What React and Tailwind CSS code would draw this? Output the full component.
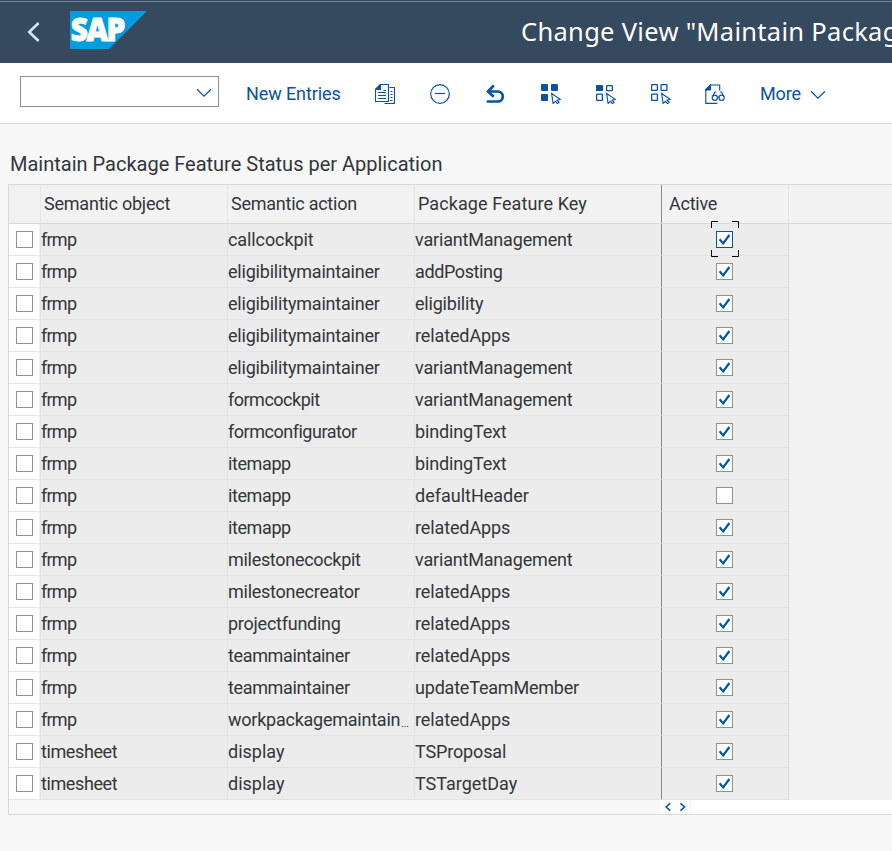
const ROWS = [
  ['frmp', 'callcockpit', 'variantManagement', true],
  ['frmp', 'eligibilitymaintainer', 'addPosting', true],
  ['frmp', 'eligibilitymaintainer', 'eligibility', true],
  ['frmp', 'eligibilitymaintainer', 'relatedApps', true],
  ['frmp', 'eligibilitymaintainer', 'variantManagement', true],
  ['frmp', 'formcockpit', 'variantManagement', true],
  ['frmp', 'formconfigurator', 'bindingText', true],
  ['frmp', 'itemapp', 'bindingText', true],
  ['frmp', 'itemapp', 'defaultHeader', false],
  ['frmp', 'itemapp', 'relatedApps', true],
  ['frmp', 'milestonecockpit', 'variantManagement', true],
  ['frmp', 'milestonecreator', 'relatedApps', true],
  ['frmp', 'projectfunding', 'relatedApps', true],
  ['frmp', 'teammaintainer', 'relatedApps', true],
  ['frmp', 'teammaintainer', 'updateTeamMember', true],
  ['frmp', 'workpackagemaintain', 'relatedApps', true],
  ['timesheet', 'display', 'TSProposal', true],
  ['timesheet', 'display', 'TSTargetDay', true],
];

const TRACKING = {
  frmp: 'tracking-[-0.75px]',
  timesheet: 'tracking-[-0.4px]',
  callcockpit: 'tracking-[-0.1px]',
  eligibilitymaintainer: 'tracking-[-0.2px]',
  formcockpit: 'tracking-[-0.5px]',
  formconfigurator: 'tracking-[-0.48px]',
  itemapp: 'tracking-[-0.4px]',
  milestonecockpit: 'tracking-[-0.3px]',
  milestonecreator: 'tracking-[-0.25px]',
  projectfunding: 'tracking-[-0.25px]',
  teammaintainer: 'tracking-[-0.35px]',
  workpackagemaintain: 'tracking-[-0.24px]',
  variantManagement: 'tracking-[-0.18px]',
  addPosting: 'tracking-[-0.38px]',
  eligibility: 'tracking-[-0.2px]',
  relatedApps: 'tracking-[-0.12px]',
  bindingText: 'tracking-[-0.15px]',
  updateTeamMember: 'tracking-[-0.2px]',
  TSProposal: 'tracking-[-0.15px]',
};

function CellText({ children }) {
  return <span className={TRACKING[children] ?? 'tracking-normal'}>{children}</span>;
}

function Checkbox({ checked, focused }) {
  return (
    <span
      className={`relative block h-[17px] w-[17px] shrink-0 border bg-white ${
        focused ? 'border-[#0854a0]' : 'border-[#89919a]'
      }`}
    >
      {checked && (
        <svg viewBox="0 0 15 15" className="block h-[15px] w-[15px]" fill="none" stroke="#0854a0" strokeWidth="2.2">
          <path d="M2.6 7.2 6.2 11.4 12.4 3" />
        </svg>
      )}
      {focused && (
        <svg viewBox="0 0 28 36" className="absolute -left-[6px] -top-[11px] h-[36px] w-[28px]" fill="none" stroke="#000">
          <path d="M.5 7V.5H7M21 .5h6.5V7M27.5 29v6.5H21M7 35.5H.5V29" />
        </svg>
      )}
    </span>
  );
}

function Header() {
  return (
    <header className="flex h-[63px] items-center overflow-hidden bg-[#354a5f] shadow-[inset_0_1px_0_#354a5f,inset_0_2px_0_#7286ae]">
      <svg viewBox="0 0 16 22" className="ml-[26px] mt-[1px] h-[22px] w-[16px] shrink-0" fill="none" stroke="#d1e8ff" strokeWidth="2.5">
        <path d="M12.6 2 3.2 11l9.4 9" />
      </svg>
      <svg viewBox="0 0 77 38" className="ml-[28px] mb-[3px] h-[38px] w-[77px] shrink-0">
        <path d="M0 0H77L39 38H0Z" fill="#009de0" />
        <text x="0.8" y="29.6" textLength="53" lengthAdjust="spacingAndGlyphs" fontFamily="Open Sans" fontWeight="800" fontSize="31" letterSpacing="-1.6" fill="#fff" stroke="#fff" strokeWidth="0.9">
          SAP
        </text>
      </svg>
      <h1 className="ml-[374px] mb-[1px] whitespace-nowrap font-['Noto_Sans',sans-serif] text-[25.5px] leading-[32px] tracking-[0.3px] text-white">
        Change View "Maintain Package Feature Status per Application": Overview
      </h1>
    </header>
  );
}

function Cursor() {
  return (
    <path
      d="M10.6 9.5 19.2 15.4l-3.1.8 2 2.2-1.7 1.2-1.9-2.2-2.4 2Z"
      fill="#fff"
      stroke="#0854a0"
      strokeWidth="1.15"
    />
  );
}

function Toolbar() {
  return (
    <div className="flex h-[61px] items-center border-b border-[#d9d9d9] bg-white pt-[1px] text-[#0854a0]">
      <div className="ml-[20px] mb-[4px] flex h-[31px] w-[199px] shrink-0 items-center justify-end border border-[#89919a] pr-[6px]">
        <svg viewBox="0 0 16 10" className="mt-[2px] h-[10px] w-[16px]" fill="none" stroke="#0854a0" strokeWidth="1.2">
          <path d="M1 1.3 8 8.2l7-6.9" />
        </svg>
      </div>
      <button className="ml-[27px] w-[96px] shrink-0 whitespace-nowrap text-left font-['Roboto',sans-serif] text-[18px] leading-[24px] tracking-[-0.1px]">
        New Entries
      </button>
      <svg viewBox="0 0 20 20" className="ml-[33px] h-[20px] w-[20px] shrink-0" fill="none" stroke="#0854a0" strokeWidth="1.15">
        <path d="M14.5 3.5h5v16h-10M15.5 7.5h2M15.5 10.5h2M15.5 13.5h2M15 16.5h2.5" />
        <path d="M.5 5.5 5.5.5h8v17H.5ZM8.5 6.5H11M3 8.5h8M3 11.5h8M3 14.5h8" />
        <path d="M.5 5.5 5.5.5v5Z" fill="#0854a0" />
      </svg>
      <svg viewBox="0 0 20 20" className="ml-[35px] h-[20px] w-[20px] shrink-0" fill="none" stroke="#0854a0" strokeWidth="1.2">
        <circle cx="10" cy="10" r="9.3" />
        <path d="M5 9.5h10" />
      </svg>
      <svg viewBox="0 0 20 20" className="ml-[36px] h-[20px] w-[20px] shrink-0" fill="none" stroke="#0854a0" strokeWidth="2.7">
        <path d="M1.8 17.5H11.8a5 5 0 0 0 0-10H2.6" strokeLinecap="round" />
        <path d="M7.8 1.4 1.9 7.5l5.9 5.3" />
      </svg>
      <svg viewBox="0 0 20 20" className="ml-[35px] h-[20px] w-[20px] shrink-0">
        <g fill="#0854a0"><rect width="7" height="7" rx="1" /><rect x="10" width="7" height="7" rx="1" /><rect y="10" width="7" height="7" rx="1" /></g>
        <Cursor />
      </svg>
      <svg viewBox="0 0 20 20" className="ml-[35px] h-[20px] w-[20px] shrink-0">
        <rect y="1" width="7" height="6" rx=".6" fill="#0854a0" />
        <g fill="none" stroke="#0854a0" strokeWidth="1.3"><rect x="10.6" y="1.6" width="5.8" height="5" rx=".6" /><rect x=".6" y="10.1" width="5.8" height="6.3" rx=".6" /></g>
        <Cursor />
      </svg>
      <svg viewBox="0 0 20 20" className="ml-[35px] h-[20px] w-[20px] shrink-0">
        <g fill="none" stroke="#0854a0" strokeWidth="1.3"><rect x=".6" y=".6" width="5.8" height="5.8" rx=".6" /><rect x="10.1" y=".6" width="5.8" height="5.8" rx=".6" /><rect x=".6" y="10.1" width="5.8" height="6.3" rx=".6" /></g>
        <Cursor />
      </svg>
      <svg viewBox="0 0 20 20" className="ml-[34px] h-[20px] w-[20px] shrink-0" fill="none" stroke="#0854a0" strokeWidth="1.15">
        <path d="M12.5 19.3H.8V5.5L5.5 1h9.2v5.5" />
        <path d="M.8 6 5.5 1v5Z" fill="#0854a0" />
        <circle cx="9.8" cy="13.7" r="2.6" /><circle cx="16.6" cy="13.7" r="2.6" />
        <path d="M12.2 13.2h2M7.6 12.4 10 8h1.4M18.8 12.4 16.5 8h-1.4" />
      </svg>
      <button className="ml-[35px] flex shrink-0 items-center whitespace-nowrap font-['Roboto',sans-serif] text-[18px] leading-[24px] tracking-[-0.15px]">
        <span className="w-[50px] text-left">More</span>
        <svg viewBox="0 0 16 10" className="mt-[3px] h-[10px] w-[16px]" fill="none" stroke="#0854a0" strokeWidth="1.2">
          <path d="M1 1.3 8 8.2l7-6.9" />
        </svg>
      </button>
    </div>
  );
}

export default function App() {
  return (
    <div className="flex h-[851px] w-[892px] flex-col overflow-hidden bg-[#f7f7f7] font-['Roboto',sans-serif] text-[#32363a]">
      <Header />
      <Toolbar />
      <h2 className="ml-[10px] mt-[26px] h-[34px] whitespace-nowrap text-[20px] leading-[28px]">
        Maintain Package Feature Status per Application
      </h2>
      <main className="ml-[8px] flex h-[631px] flex-col border-y border-l border-[#d9d9d9] text-[18px]">
        <div className="flex h-[39px] shrink-0 border-b border-[#d9d9d9] bg-[#f2f2f2] leading-[37px]">
          <div className="w-[32px] border-r border-[#e5e5e5]" />
          <div className="w-[187px] whitespace-nowrap border-r border-[#e5e5e5] pl-[3px] tracking-[-0.22px]">Semantic object</div>
          <div className="w-[187px] whitespace-nowrap border-r border-[#e5e5e5] pl-[3px] tracking-[-0.25px]">Semantic action</div>
          <div className="w-[247px] whitespace-nowrap border-r border-[#89898c] pl-[3px] tracking-[0.08px]">Package Feature Key</div>
          <div className="w-[127px] whitespace-nowrap border-r border-[#e5e5e5] pl-[7px] tracking-[-0.25px]">Active</div>
        </div>
        <div className="flex h-[576px] shrink-0 bg-[#f2f2f2]">
          <div className="w-[780px] border-r border-[#d9d9d9]">
            {ROWS.map(([object, action, key, active], i) => (
              <div key={i} className="flex h-[32px] bg-[#ececec] leading-[32px]">
                <div className="flex w-[31px] items-center border-b border-r border-b-[#e5e5e5] border-r-[#f2f2f2] bg-white pl-[7px]">
                  <Checkbox />
                </div>
                <div className="w-[188px] border-b border-x border-[#e3e3e3]"><CellText>{object}</CellText></div>
                <div className="flex w-[187px] whitespace-nowrap border-b border-r border-[#e3e3e3]">
                  <CellText>{action}</CellText>
                  {action === 'workpackagemaintain' && <span className="ml-[1px] text-[9px] font-medium leading-[40px]">...</span>}
                </div>
                <div className="w-[247px] border-b border-r border-b-[#e3e3e3] border-r-[#89898c]"><CellText>{key}</CellText></div>
                <div className="flex w-[126px] items-center border-b border-[#e3e3e3] pl-[54px]">
                  <Checkbox checked={active} focused={i === 0} />
                </div>
              </div>
            ))}
          </div>
        </div>
        <div className="flex h-[14px] shrink-0">
          <div className="w-[651px]" />
          <div className="flex w-[31px] items-center gap-[9px] border-r border-[#f2f2f2] bg-white pl-[5px]">
            <svg viewBox="0 0 6 8" className="h-[8px] w-[6px]" fill="none" stroke="#0854a0" strokeWidth="1.6"><path d="M5.2 .3 1.1 4 5.2 7.7" /></svg>
            <svg viewBox="0 0 6 8" className="h-[8px] w-[6px]" fill="none" stroke="#0854a0" strokeWidth="1.6"><path d="M.4 .3 4.5 4 .4 7.7" /></svg>
          </div>
          <div className="flex-1 bg-white" />
        </div>
      </main>
    </div>
  );
}
